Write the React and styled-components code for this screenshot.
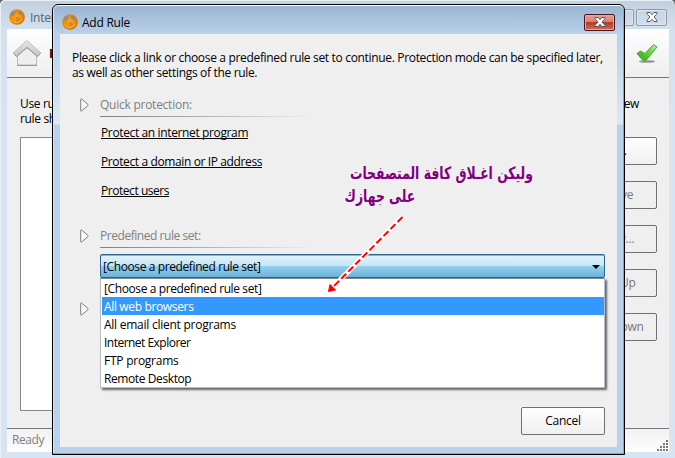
/**
* Add Rule dialog over the main program window
*/
import React, {Component} from 'react';
import styled, {createGlobalStyle} from 'styled-components';

const GlobalStyle = createGlobalStyle`
  * { box-sizing: border-box; }
  body {
    margin: 0;
    overflow: hidden;
    background: #5c6064;
    color: #000;
    font: 12px/15px "Open Sans", "Noto Sans", sans-serif;
    letter-spacing: -0.25px;
  }
`;

let Screen = styled.div`
  position: relative;
  width: 675px;
  height: 458px;
  overflow: hidden;
`;

let MainWindow = styled.div`
  display: flex;
  flex-direction: column;
  height: 100%;
  padding: 0 6px 6px 7px;
  background: linear-gradient(#c2cfdd, #d3e0ee 29px, #d7e4f1 120px);
  border-radius: 5px 5px 0 0;
  box-shadow: inset 1px 1px 0 #e8eff6;
`;

let TitleBar = styled.div`
  display: flex;
  align-items: center;
  flex: none;
  gap: 5px;
  height: 29px;
  padding: 5px 2px 0 2px;
  color: #5c6168;
`;

let Title = styled.div`
  flex: 1;
`;

let CaptionButton = styled.div`
  display: flex;
  align-items: center;
  justify-content: center;
  width: 31px;
  height: 17px;
  border: 1px solid #8e9aab;
  border-radius: 2px;
  box-shadow: inset 0 0 0 1px #dbe5ef;
  margin-left: -3px;
`;

let Toolbar = styled.div`
  display: flex;
  align-items: center;
  justify-content: space-between;
  flex: none;
  height: 49px;
  padding: 0 10px 0 5px;
  background: linear-gradient(#fefefe, #eeeeee);
  border-bottom: 1px solid #76797c;
`;

let Heading = styled.div`
  flex: 1;
  padding-left: 7px;
  color: #400000;
  font-weight: bold;
`;

let Content = styled.div`
  display: flex;
  flex-direction: column;
  flex: 1;
  padding: 18px 12px 17px 13px;
  background: #efefef;
`;

let Intro = styled.div`
  display: flex;
  justify-content: space-between;
  height: 41px;
  padding-right: 18px;
  letter-spacing: -0.35px;
`;

let Columns = styled.div`
  display: flex;
  justify-content: space-between;
  flex: 1;
`;

let RuleList = styled.div`
  width: 520px;
  background: #fff;
  border: 1px solid #828790;
`;

let ButtonColumn = styled.div`
  display: flex;
  flex-direction: column;
  gap: 16px;
`;

let Button = styled.div`
  width: ${props => props.$width || 84}px;
  height: 28px;
  border: 1px solid #707070;
  border-radius: 2px;
  line-height: 26px;
  text-align: center;
  color: ${props => props.disabled ? '#76797c' : '#000'};
  background: ${props => props.disabled ? '#efefef' : 'linear-gradient(#fefefe, #f0f0f0)'};
`;

let StatusBar = styled.div`
  display: flex;
  justify-content: space-between;
  align-items: flex-end;
  flex: none;
  height: 24px;
  padding: 0 1px 1px 5px;
  border-top: 1px solid #76797c;
  background: linear-gradient(#f1f1f1, #fefefe);
  color: #808080;
`;

let Status = styled.div`
  padding-bottom: 4px;
  letter-spacing: -0.4px;
`;

let Dialog = styled.div`
  position: absolute;
  left: 52px;
  top: 4px;
  width: 573px;
  height: 451px;
  display: flex;
  flex-direction: column;
  padding: 0 7px 7px;
  border: 1px solid #000;
  border-radius: 6px 6px 0 0;
  background: linear-gradient(#9ab4d1, #b9d1ea 29px, #dce8f5 119px, #b9d1ea 120px);
  box-shadow: inset 0 1px 0 #fff, inset -1px -1px 0 #3cc4e0, inset 1px 0 0 #d5e5f5;
`;

let DialogTitle = styled.div`
  display: flex;
  align-items: center;
  flex: none;
  gap: 4px;
  height: 29px;
  padding: 5px 2px 0 2px;
`;

let CloseButton = styled.div`
  display: flex;
  align-items: center;
  justify-content: center;
  width: 31px;
  height: 17px;
  border: 1px solid #4c1522;
  border-radius: 2px;
  box-shadow: inset 0 0 0 1px #e5a79d;
  background: linear-gradient(#e7a093, #d98273 45%, #b6382a 50%, #cf7056);
`;

let DialogBody = styled.div`
  display: flex;
  flex-direction: column;
  flex: 1;
  padding: 16px 12px 12px;
  background: #efefef;
`;

let Message = styled.div`
  height: 47px;
  white-space: nowrap;
  letter-spacing: -0.328px;
`;

let SectionTitle = styled.div`
  display: flex;
  align-items: center;
  gap: 11px;
  height: 15px;
  padding-left: 8px;
  color: #808080;
  letter-spacing: ${props => props.$spacing || -0.25}px;
`;

let Rule = styled.div`
  width: 214px;
  height: 1px;
  margin: 4px 0 0 28px;
  background: linear-gradient(90deg, #808080, #a8a8a8 40%, #efefef);
`;

let Links = styled.div`
  display: flex;
  flex-direction: column;
  align-items: flex-start;
  gap: 14px;
  height: 111px;
  padding: 8px 0 0 29px;
`;

let RuleLink = styled.a`
  border-bottom: 1px solid #000;
  height: 14px;
  line-height: 15px;
  margin-bottom: 1px;
  letter-spacing: ${props => props.$spacing}px;
`;

let Select = styled.div`
  position: relative;
  width: 505px;
  height: 24px;
  margin: 6px 0 0 28px;
  padding: 1px 4px 0 2px;
  display: flex;
  align-items: center;
  justify-content: space-between;
  border: 1px solid #2c628b;
  border-radius: 2px;
  box-shadow: inset 0 1px 0 #8fb0c6;
  background: linear-gradient(#e4f3fb, #c5e6f6 49%, #98d1ef 50%, #68b3db);
  letter-spacing: -0.39px;
`;

let Menu = styled.div`
  position: absolute;
  left: -1px;
  top: 23px;
  width: 505px;
  height: 110px;
  background: #fff;
  border: 1px solid #b8bcc8;
  border-top-color: #80868c;
  box-shadow: 2px 2px 2px #666;
`;

let MenuItem = styled.div`
  height: 18px;
  margin-left: 1px;
  padding-left: 2px;
  line-height: 19px;
  letter-spacing: ${props => props.$spacing}px;
  background: ${props => props.$selected ? '#3399ff' : 'none'};
  color: ${props => props.$selected ? '#fff' : '#000'};
`;

let CollapsedSection = styled.div`
  padding: 24px 0 0 8px;
  flex: 1;
`;

let DialogFooter = styled.div`
  display: flex;
  justify-content: flex-end;
`;

let Note = styled.div`
  position: absolute;
  right: ${props => props.$right}px;
  top: ${props => props.$top}px;
  color: #800080;
  font: bold 17px/24px "DejaVu Sans Condensed", "DejaVu Sans", sans-serif;
  font-stretch: condensed;
  letter-spacing: 0;
  white-space: pre;
  transform: scaleX(0.81);
  transform-origin: right;
`;

let ArrowLayer = styled.svg`
  position: absolute;
  left: 320px;
  top: 210px;
`;

const Globe = () => <svg width="16" height="16" viewBox="0 0 16 16">
  <defs>
    <radialGradient id="globe" cx="45%" cy="45%" r="60%">
      <stop offset="0" stopColor="#ffa60f" />
      <stop offset="0.7" stopColor="#f58500" />
      <stop offset="1" stopColor="#b5640f" />
    </radialGradient>
  </defs>
  <circle cx="8" cy="8" r="7.8" fill="url(#globe)" />
  <path d="M1 5L3.500 2l3 .3.3 1.700L5 5.500l.5 2-2-.5z" fill="#8a8f92" />
  <path d="M9.500 1.500l3 1.200 1.500 3-1.500 1-1-1.700-1.500.3L8.700 3.500z" fill="#8d8b7e" />
  <path d="M7 8l2.500.5.8 1.500L8.500 13 7.500 10.500z" fill="#a08f70" />
  <path d="M2.500 11q5 5.500 11-.5" fill="none" stroke="#ffc62c" />
</svg>;

const Cross = () => <svg width="12" height="10" viewBox="0 0 12 10">
  <path d="M1 .5h3l2 2.200L8 .5h3v1.200L8 5l3 3.300v1.200H8L6 7.300 4 9.500H1V8.300L4 5 1 1.700z" fill="#fff" stroke="#50545f" />
</svg>;

const Home = () => <svg width="30" height="28" viewBox="0 0 30 28">
  <defs>
    <linearGradient id="roof" x1="0" y1="0" x2="0" y2="1">
      <stop offset="0" stopColor="#e6e6e6" />
      <stop offset="1" stopColor="#c4c4c4" />
    </linearGradient>
  </defs>
  <path d="M5.500 14v12h19V14L15 7z" fill="#eeeeee" stroke="#b8b8b8" />
  <path d="M5 26.500h20" stroke="#999" />
  <path d="M15 1.500L1 14 4.500 17.500 15 8.500 25.500 17.500 29 14z" fill="url(#roof)" stroke="#c0c0c0" />
  <path d="M1.500 14.500L4.500 17.500 15 8.500 25.500 17.500 28.500 14.500" fill="none" stroke="#8c8c8c" />
</svg>;

const Check = () => <svg width="24" height="22" viewBox="0 0 24 22">
  <defs>
    <linearGradient id="check" x1="1" y1="0" x2="0" y2="1">
      <stop offset="0" stopColor="#c2edc2" />
      <stop offset="0.45" stopColor="#66d62a" />
      <stop offset="1" stopColor="#2ca32c" />
    </linearGradient>
  </defs>
  <ellipse cx="12" cy="19.500" rx="8" ry="1.300" fill="#666" opacity="0.7" />
  <path d="M2 11.500L5.500 9 10 11.500 18.500 2.500 22 5 11 18.500H8z" fill="url(#check)" stroke="#45a845" />
</svg>;

const Triangle = () => <svg width="9" height="14" viewBox="0 0 9 14">
  <path d="M.7 1.200Q.7.500 1.500 1L8 6.400q.5.600 0 1.200L1.500 13Q.7 13.500.7 12.800z" fill="#f8f8f8" stroke="#808080" />
</svg>;

const Grip = () => <svg width="11" height="11" viewBox="0 0 11 11">
  {[0, 1, 2, 3].map(row => Array.from({length: row + 1}, (_, i) =>
    <rect key={row + '-' + i} x={9 - i * 3} y={row * 3} width="2" height="2" fill="#777" />
  ))}
</svg>;

let options = [
  {label: '[Choose a predefined rule set]', spacing: -0.39},
  {label: 'All web browsers', spacing: -0.35, selected: true},
  {label: 'All email client programs', spacing: -0.25},
  {label: 'Internet Explorer', spacing: -0.52},
  {label: 'FTP programs', spacing: -0.25},
  {label: 'Remote Desktop', spacing: -0.4}
];

class AddRuleDialog extends Component {
  render() {
    return <Dialog>
      <DialogTitle>
        <Globe />
        <Title>Add Rule</Title>
        <CloseButton><Cross /></CloseButton>
      </DialogTitle>
      <DialogBody>
        <Message>
          Please click a link or choose a predefined rule set to continue. Protection mode can be specified later,<br />
          as well as other settings of the rule.
        </Message>
        <SectionTitle><Triangle />Quick protection:</SectionTitle>
        <Rule />
        <Links>
          <RuleLink $spacing={-0.37}>Protect an internet program</RuleLink>
          <RuleLink $spacing={-0.38}>Protect a domain or IP address</RuleLink>
          <RuleLink $spacing={-0.45}>Protect users</RuleLink>
        </Links>
        <SectionTitle $spacing={-0.45}><Triangle />Predefined rule set:</SectionTitle>
        <Rule />
        <Select>
          {options[0].label}
          <svg width="8" height="4"><path d="M0 0h8L4 4z" /></svg>
          <Menu>
            {options.map(option => <MenuItem key={option.label} $spacing={option.spacing} $selected={option.selected}>
              {option.label}
            </MenuItem>)}
          </Menu>
        </Select>
        <CollapsedSection><Triangle /></CollapsedSection>
        <DialogFooter><Button>Cancel</Button></DialogFooter>
      </DialogBody>
    </Dialog>;
  }
}

class App extends Component {
  render() {
    return <Screen>
      <GlobalStyle />
      <MainWindow>
        <TitleBar>
          <Globe />
          <Title>Inter</Title>
          <CaptionButton />
          <CaptionButton><Cross /></CaptionButton>
        </TitleBar>
        <Toolbar>
          <Home />
          <Heading>R</Heading>
          <Check />
        </Toolbar>
        <Content>
          <Intro>
            <div>Use ru<br />rule sh</div>
            <div>new</div>
          </Intro>
          <Columns>
            <RuleList />
            <ButtonColumn>
              <Button $width={91}>Add...</Button>
              <Button $width={91} disabled>Remove</Button>
              <Button $width={91} disabled>Modify...</Button>
              <Button $width={91} disabled>Move Up</Button>
              <Button $width={91} disabled>Move Down</Button>
            </ButtonColumn>
          </Columns>
        </Content>
        <StatusBar>
          <Status>Ready</Status>
          <Grip />
        </StatusBar>
      </MainWindow>
      <AddRuleDialog />
      <Note dir="rtl" lang="ar" $right={142} $top={161}>وليكن اغـلاق كافة المتصفحات</Note>
      <Note dir="rtl" lang="ar" $right={260} $top={184}>على جهازك</Note>
      <ArrowLayer width="90" height="90" viewBox="0 0 90 90">
        <path d="M82.500 7L14 76" stroke="#fff" strokeWidth="5" />
        <path d="M82.500 7L14 76" stroke="#ff0000" strokeWidth="2" strokeDasharray="7 3" />
        <path d="M8.500 81.500l1.500-7 5.500 5.500z" fill="#ff0000" stroke="#ff0000" />
      </ArrowLayer>
    </Screen>;
  }
}

export default App;
